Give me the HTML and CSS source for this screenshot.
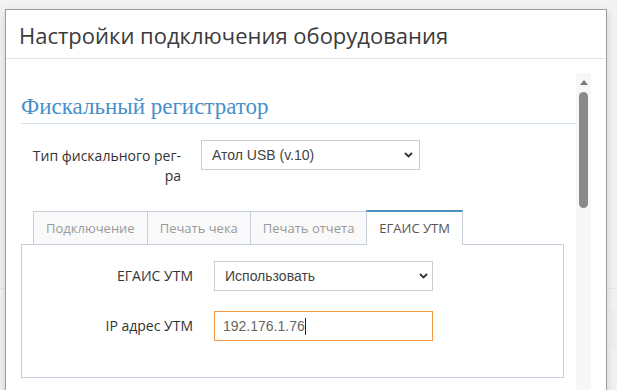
FILE: index.html
```html
<!DOCTYPE html>
<html lang="ru">
<head>
    <meta charset="UTF-8">
    <meta name="viewport" content="width=device-width, initial-scale=1.0">
    <title>Настройки подключения оборудования</title>
    <link rel="stylesheet" href="styles.css">
</head>
<body>
    <div class="page">
        <div class="page-band"></div>
        <div class="page-row">
            <div class="page-note"></div>
        </div>
    </div>

    <div class="modal">
        <div class="modal-header">
            <h2 class="modal-title">Настройки подключения оборудования</h2>
        </div>
        <div class="modal-body">
            <h3 class="section-title">Фискальный регистратор</h3>

            <div class="form-row">
                <label class="form-label" for="kktType">Тип фискального рег-ра</label>
                <div class="select-wrap">
                    <select id="kktType" class="form-select">
                        <option>Атол USB (v.10)</option>
                    </select>
                    <svg class="chevron" width="9" height="6" viewBox="0 0 9 6"><path d="M1 1l3.5 3.5L8 1" fill="none" stroke="#333" stroke-width="1.8"/></svg>
                </div>
            </div>

            <ul class="tabs">
                <li class="tab">Подключение</li>
                <li class="tab">Печать чека</li>
                <li class="tab">Печать отчета</li>
                <li class="tab active">ЕГАИС УТМ</li>
            </ul>
            <div class="tab-panel">
                <div class="form-row">
                    <label class="form-label" for="egais">ЕГАИС УТМ</label>
                    <div class="select-wrap">
                        <select id="egais" class="form-select">
                            <option>Использовать</option>
                        </select>
                        <svg class="chevron" width="9" height="6" viewBox="0 0 9 6"><path d="M1 1l3.5 3.5L8 1" fill="none" stroke="#333" stroke-width="1.8"/></svg>
                    </div>
                </div>
                <div class="form-row">
                    <label class="form-label">IP адрес УТМ</label>
                    <div class="form-input focused">192.176.1.76<span class="caret"></span></div>
                </div>
            </div>

            <div class="scrollbar">
                <div class="scroll-arrow"></div>
                <div class="scroll-thumb"></div>
            </div>
        </div>
    </div>
</body>
</html>
```

FILE: styles.css
```css
body {
    margin: 0;
    padding: 0;
    background-color: #f3f3f3;
    font-family: "Open Sans", Arial, sans-serif;
    color: #333;
    overflow: hidden;
}

.page {
    height: 390px;
}

.page-band {
    height: 288px;
    border-bottom: 1px solid #e6e6e6;
}

.page-row {
    display: flex;
    justify-content: flex-end;
    padding-top: 20px;
}

.page-note {
    width: 6px;
    height: 40px;
    background: #eef1ec;
}

.modal {
    position: absolute;
    left: 5px;
    top: 9px;
    width: 600px;
    height: 500px;
    background: #fff;
    border: 1px solid #9c9c9c;
    box-shadow: 0 3px 9px rgba(0, 0, 0, 0.15);
}

.modal-header {
    height: 48px;
    display: flex;
    align-items: center;
    padding-left: 13px;
    border-bottom: 1px solid #e5e5e5;
}

.modal-title {
    margin: 0;
    font-size: 22px;
    font-weight: normal;
    color: #3b3b3b;
    padding-top: 2px;
}

.modal-body {
    position: relative;
    padding: 33px 30px 0 15px;
}

.section-title {
    margin: 0;
    font-family: "Liberation Serif", "Times New Roman", serif;
    font-size: 23px;
    font-weight: normal;
    line-height: 30px;
    color: #478fca;
    padding-bottom: 1px;
    border-bottom: 1px solid #d5e3ef;
}

.form-row {
    display: flex;
    align-items: flex-start;
    gap: 20px;
    margin-top: 16px;
}

.form-label {
    width: 160px;
    text-align: right;
    font-size: 14px;
    line-height: 20px;
    padding-top: 6px;
    color: #333;
}

.select-wrap {
    position: relative;
}

.form-select {
    appearance: none;
    -webkit-appearance: none;
    width: 219px;
    height: 30px;
    margin: 0;
    padding: 0 10px;
    border: 1px solid #ccc;
    border-radius: 0;
    background: #fff;
    font-family: "Liberation Sans", Arial, sans-serif;
    font-size: 14px;
    color: #444;
}

.chevron {
    position: absolute;
    right: 7px;
    top: 12px;
}

.tabs {
    display: flex;
    list-style: none;
    margin: 25px 0 0 12px;
    padding: 0;
    position: relative;
    z-index: 1;
}

.tab {
    padding: 0 12px;
    height: 32px;
    line-height: 32px;
    font-size: 13px;
    color: #999;
    background: #f9f9f9;
    border: 1px solid #c5d0dc;
    border-bottom: none;
    margin-right: -1px;
}

.tab.active {
    background: #fff;
    color: #555;
    border-top: 2px solid #4c8fbd;
    margin-top: -1px;
    height: 33px;
    margin-bottom: -1px;
    padding: 0 12px;
}

.tab-panel {
    width: 541px;
    border: 1px solid #c5d0dc;
    padding: 0 0 36px 0;
}

.tab-panel .form-row {
    align-items: center;
    gap: 21px;
}

.tab-panel .form-row + .form-row {
    margin-top: 20px;
}

.tab-panel .form-label {
    width: 171px;
    padding-top: 0;
}

.tab-panel .chevron {
    right: 5px;
}

.form-input {
    width: 201px;
    height: 28px;
    line-height: 28px;
    padding: 0 8px;
    border: 1px solid #f59942;
    font-family: "Liberation Sans", Arial, sans-serif;
    font-size: 14px;
    color: #666;
    box-sizing: content-box;
}

.caret {
    display: inline-block;
    width: 1px;
    height: 17px;
    background: #222;
    vertical-align: -4px;
}

.scrollbar {
    position: absolute;
    top: 14px;
    right: 15px;
    width: 15px;
    height: 400px;
    background: #f7f7f7;
}

.scroll-arrow {
    margin: 7px auto 0;
    width: 0;
    height: 0;
    border-left: 4px solid transparent;
    border-right: 4px solid transparent;
    border-bottom: 5px solid #777;
}

.scroll-thumb {
    margin: 7px auto 0;
    width: 9px;
    height: 116px;
    border-radius: 5px;
    background: #8a8a8a;
}
```
